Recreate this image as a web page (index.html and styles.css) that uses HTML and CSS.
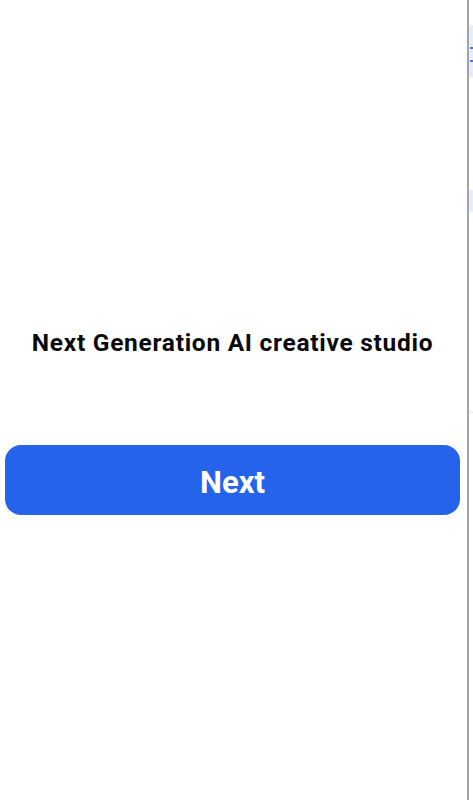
FILE: index.html
```html
<!DOCTYPE html>
<html lang="en">
<head>
  <meta charset="UTF-8" />
  <title>Welcome</title>
  <link rel="stylesheet" href="styles.css">
</head>
<body>
  <div class="app">
    <div class="screen">
      <h1 class="tagline">Next Generation AI creative studio</h1>
      <button type="button" class="next-btn">Next</button>
    </div>
    <div class="side">
      <div class="side-panel top">
        <div class="side-line"></div>
        <div class="side-line"></div>
      </div>
      <div class="side-panel mid"></div>
      <div class="side-rule"></div>
    </div>
  </div>
</body>
</html>
```

FILE: styles.css
```css
body {
  margin: 0;
  font-family: Roboto, "Liberation Sans", Arial, sans-serif;
  background: #fff;
}

.app {
  display: flex;
  height: 800px;
}

.screen {
  width: 469px;
  border-right: 2px solid #a3a3a3;
  display: flex;
  flex-direction: column;
  align-items: flex-start;
  padding-top: 327px;
  box-sizing: border-box;
}

.tagline {
  align-self: center;
  margin: 0 2px 0 0;
  font-size: 24.5px;
  font-weight: 700;
  letter-spacing: 0.72px;
  color: #0a0a0a;
  line-height: 32px;
}

.next-btn {
  margin-top: 86px;
  margin-left: 5px;
  width: 455px;
  height: 70px;
  padding-top: 6px;
  background-color: #2563eb;
  color: #fff;
  border: none;
  border-radius: 16px;
  font-family: inherit;
  font-size: 31px;
  font-weight: 700;
  cursor: pointer;
}

.side {
  flex: 1;
  display: flex;
  flex-direction: column;
}

.side-panel {
  background: #e6eefc;
}

.side-panel.top {
  margin-top: 25px;
  height: 52px;
  padding-top: 22px;
  box-sizing: border-box;
}

.side-line {
  height: 2px;
  background: #5577cc;
  margin-bottom: 11px;
  margin-left: 1px;
}

.side-panel.mid {
  margin-top: 113px;
  height: 22px;
}

.side-rule {
  margin-top: 200px;
  height: 1px;
  background: #e2e2e2;
}
```
